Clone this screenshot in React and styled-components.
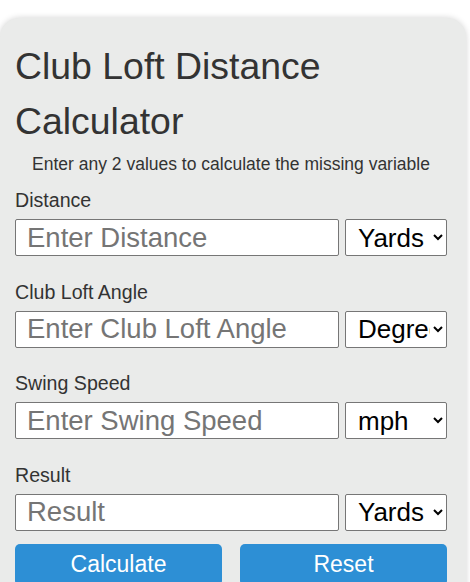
import React from 'react';
import styled, { createGlobalStyle } from 'styled-components';

const GlobalStyle = createGlobalStyle`
    body {
        margin: 0;
        background: #ffffff;
        font-family: "Liberation Sans", Arial, sans-serif;
    }
`;

const fields = [
    { label: 'Distance', placeholder: 'Enter Distance', unit: 'Yards' },
    { label: 'Club Loft Angle', placeholder: 'Enter Club Loft Angle', unit: 'Degrees' },
    { label: 'Swing Speed', placeholder: 'Enter Swing Speed', unit: 'mph' },
    { label: 'Result', placeholder: 'Result', unit: 'Yards' },
];

const App = () => {
    return (
        <>
            <GlobalStyle />
            <Card>
                <Title>Club Loft Distance Calculator</Title>
                <Subtitle>Enter any 2 values to calculate the missing variable</Subtitle>
                {fields.map((f, i) => (
                    <Group key={f.label} $last={i === fields.length - 1}>
                        <Label>{f.label}</Label>
                        <Row>
                            <Input type="text" placeholder={f.placeholder} />
                            <Select defaultValue={f.unit}>
                                <option>{f.unit}</option>
                            </Select>
                        </Row>
                    </Group>
                ))}
                <Buttons>
                    <Button>Calculate</Button>
                    <Button>Reset</Button>
                </Buttons>
            </Card>
        </>
    );
};

const Card = styled.div`
    margin-top: 18px;
    width: 466px;
    box-sizing: border-box;
    padding: 21px 19px 20px 15px;
    background: #eaebea;
    border-radius: 20px;
    box-shadow: 0 0 6px rgba(0, 0, 0, 0.18);
    color: #333333;
`;

const Title = styled.h1`
    margin: 0;
    font-size: 37.4px;
    font-weight: normal;
    line-height: 55px;
`;

const Subtitle = styled.p`
    margin: 3px 0 12px;
    font-size: 17.5px;
    line-height: 24px;
    text-align: center;
`;

const Group = styled.div`
    margin-bottom: ${(p) => (p.$last ? '13px' : '23.5px')};
`;

const Label = styled.label`
    display: block;
    font-size: 19.6px;
    line-height: 24px;
    margin-bottom: 7px;
`;

const Row = styled.div`
    display: flex;
    gap: 6px;
`;

const Input = styled.input`
    flex: 1;
    min-width: 0;
    height: 37px;
    box-sizing: border-box;
    padding: 0 10px 0 11px;
    border: 1px solid #767676;
    border-radius: 2px;
    background: #ffffff;
    font-family: "Liberation Sans", Arial, sans-serif;
    font-size: 27.5px;
    color: #000;

    &::placeholder {
        color: #757575;
    }
`;

const Select = styled.select`
    width: 102px;
    height: 37px;
    box-sizing: border-box;
    padding: 0 0 0 8px;
    border: 1px solid #767676;
    border-radius: 2px;
    background: #ffffff;
    font-family: "Liberation Sans", Arial, sans-serif;
    font-size: 26px;
    color: #000;
`;

const Buttons = styled.div`
    display: grid;
    grid-template-columns: 1fr 1fr;
    gap: 18px;
`;

const Button = styled.button`
    height: 42px;
    border: none;
    border-radius: 5px;
    background: #2d8fd5;
    color: #ffffff;
    font-family: "Liberation Sans", Arial, sans-serif;
    font-size: 23px;
    cursor: pointer;
`;

export default App;
